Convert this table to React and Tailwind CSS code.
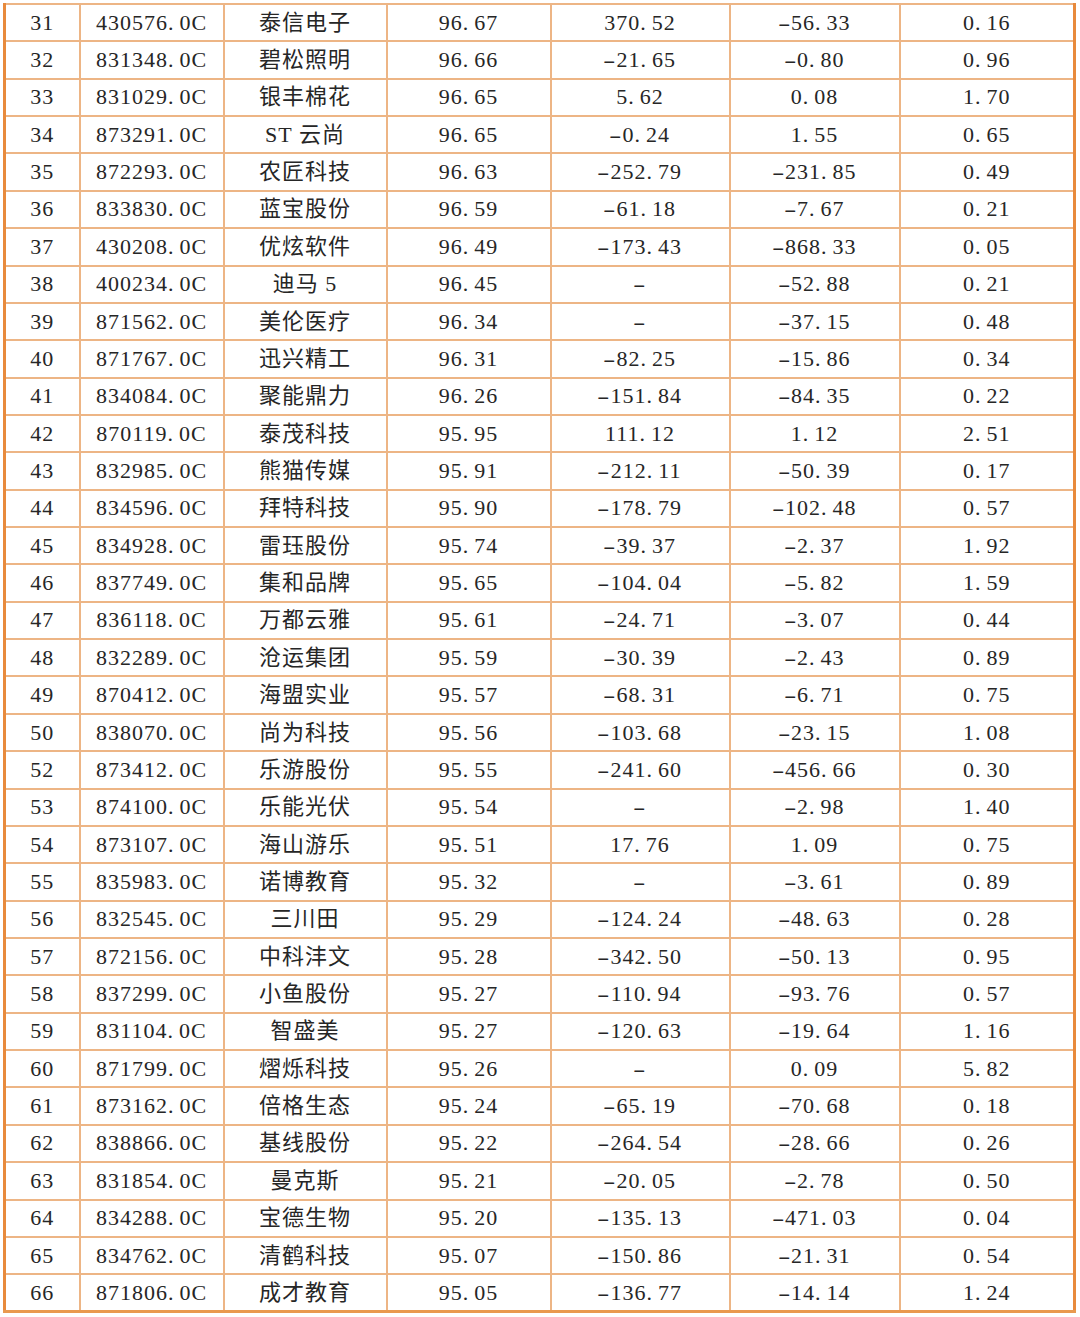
import React from 'react'

const rows = [
  ['31', '430576.0C', '泰信电子', '96.67', '370.52', '-56.33', '0.16'],
  ['32', '831348.0C', '碧松照明', '96.66', '-21.65', '-0.80', '0.96'],
  ['33', '831029.0C', '银丰棉花', '96.65', '5.62', '0.08', '1.70'],
  ['34', '873291.0C', 'ST 云尚', '96.65', '-0.24', '1.55', '0.65'],
  ['35', '872293.0C', '农匠科技', '96.63', '-252.79', '-231.85', '0.49'],
  ['36', '833830.0C', '蓝宝股份', '96.59', '-61.18', '-7.67', '0.21'],
  ['37', '430208.0C', '优炫软件', '96.49', '-173.43', '-868.33', '0.05'],
  ['38', '400234.0C', '迪马 5', '96.45', '-', '-52.88', '0.21'],
  ['39', '871562.0C', '美伦医疗', '96.34', '-', '-37.15', '0.48'],
  ['40', '871767.0C', '迅兴精工', '96.31', '-82.25', '-15.86', '0.34'],
  ['41', '834084.0C', '聚能鼎力', '96.26', '-151.84', '-84.35', '0.22'],
  ['42', '870119.0C', '泰茂科技', '95.95', '111.12', '1.12', '2.51'],
  ['43', '832985.0C', '熊猫传媒', '95.91', '-212.11', '-50.39', '0.17'],
  ['44', '834596.0C', '拜特科技', '95.90', '-178.79', '-102.48', '0.57'],
  ['45', '834928.0C', '雷珏股份', '95.74', '-39.37', '-2.37', '1.92'],
  ['46', '837749.0C', '集和品牌', '95.65', '-104.04', '-5.82', '1.59'],
  ['47', '836118.0C', '万都云雅', '95.61', '-24.71', '-3.07', '0.44'],
  ['48', '832289.0C', '沧运集团', '95.59', '-30.39', '-2.43', '0.89'],
  ['49', '870412.0C', '海盟实业', '95.57', '-68.31', '-6.71', '0.75'],
  ['50', '838070.0C', '尚为科技', '95.56', '-103.68', '-23.15', '1.08'],
  ['52', '873412.0C', '乐游股份', '95.55', '-241.60', '-456.66', '0.30'],
  ['53', '874100.0C', '乐能光伏', '95.54', '-', '-2.98', '1.40'],
  ['54', '873107.0C', '海山游乐', '95.51', '17.76', '1.09', '0.75'],
  ['55', '835983.0C', '诺博教育', '95.32', '-', '-3.61', '0.89'],
  ['56', '832545.0C', '三川田', '95.29', '-124.24', '-48.63', '0.28'],
  ['57', '872156.0C', '中科沣文', '95.28', '-342.50', '-50.13', '0.95'],
  ['58', '837299.0C', '小鱼股份', '95.27', '-110.94', '-93.76', '0.57'],
  ['59', '831104.0C', '智盛美', '95.27', '-120.63', '-19.64', '1.16'],
  ['60', '871799.0C', '熠烁科技', '95.26', '-', '0.09', '5.82'],
  ['61', '873162.0C', '倍格生态', '95.24', '-65.19', '-70.68', '0.18'],
  ['62', '838866.0C', '基线股份', '95.22', '-264.54', '-28.66', '0.26'],
  ['63', '831854.0C', '曼克斯', '95.21', '-20.05', '-2.78', '0.50'],
  ['64', '834288.0C', '宝德生物', '95.20', '-135.13', '-471.03', '0.04'],
  ['65', '834762.0C', '清鹤科技', '95.07', '-150.86', '-21.31', '0.54'],
  ['66', '871806.0C', '成才教育', '95.05', '-136.77', '-14.14', '1.24'],
]

// SimSun-style spacing: wide period, long dash
function Cell({ text }) {
  const parts = text.split(/([.\-])/)
  return parts.map((p, k) => {
    if (p === '.') return <span key={k} className="mr-[5px]">.</span>
    if (p === '-') return <span key={k} className="inline-block scale-x-[1.7] mx-[2px]">-</span>
    return <React.Fragment key={k}>{p}</React.Fragment>
  })
}

export default function App() {
  return (
    <div className="w-[1080px] h-[1317px] bg-white pt-[3px] pl-[3px]">
      <table
        className="table-fixed border-collapse w-[1073px] text-[#262626] text-[22px] tracking-[1px]"
        style={{ fontFamily: '"Liberation Serif", "Noto Sans CJK SC", serif' }}
      >
        <colgroup>
          <col className="w-[75px]" />
          <col className="w-[144px]" />
          <col className="w-[163px]" />
          <col className="w-[164px]" />
          <col className="w-[179px]" />
          <col className="w-[170px]" />
          <col className="w-[175px]" />
        </colgroup>
        <tbody>
          {rows.map((r, i) => (
            <tr key={i} className="h-[37.37px]">
              {r.map((c, j) => (
                <td
                  key={j}
                  className={
                    'p-0 text-center leading-none whitespace-nowrap border-2 border-[#edb585] ' +
                    (j === 0 ? 'border-l-[3px] border-l-[#e88a3c] ' : '') +
                    (j === 6 ? 'border-r-[3px] border-r-[#e88a3c] ' : '') +
                    (i === rows.length - 1 ? 'border-b-[3px] border-b-[#e9994f] ' : '')
                  }
                >
                  <Cell text={c} />
                </td>
              ))}
            </tr>
          ))}
        </tbody>
      </table>
    </div>
  )
}
